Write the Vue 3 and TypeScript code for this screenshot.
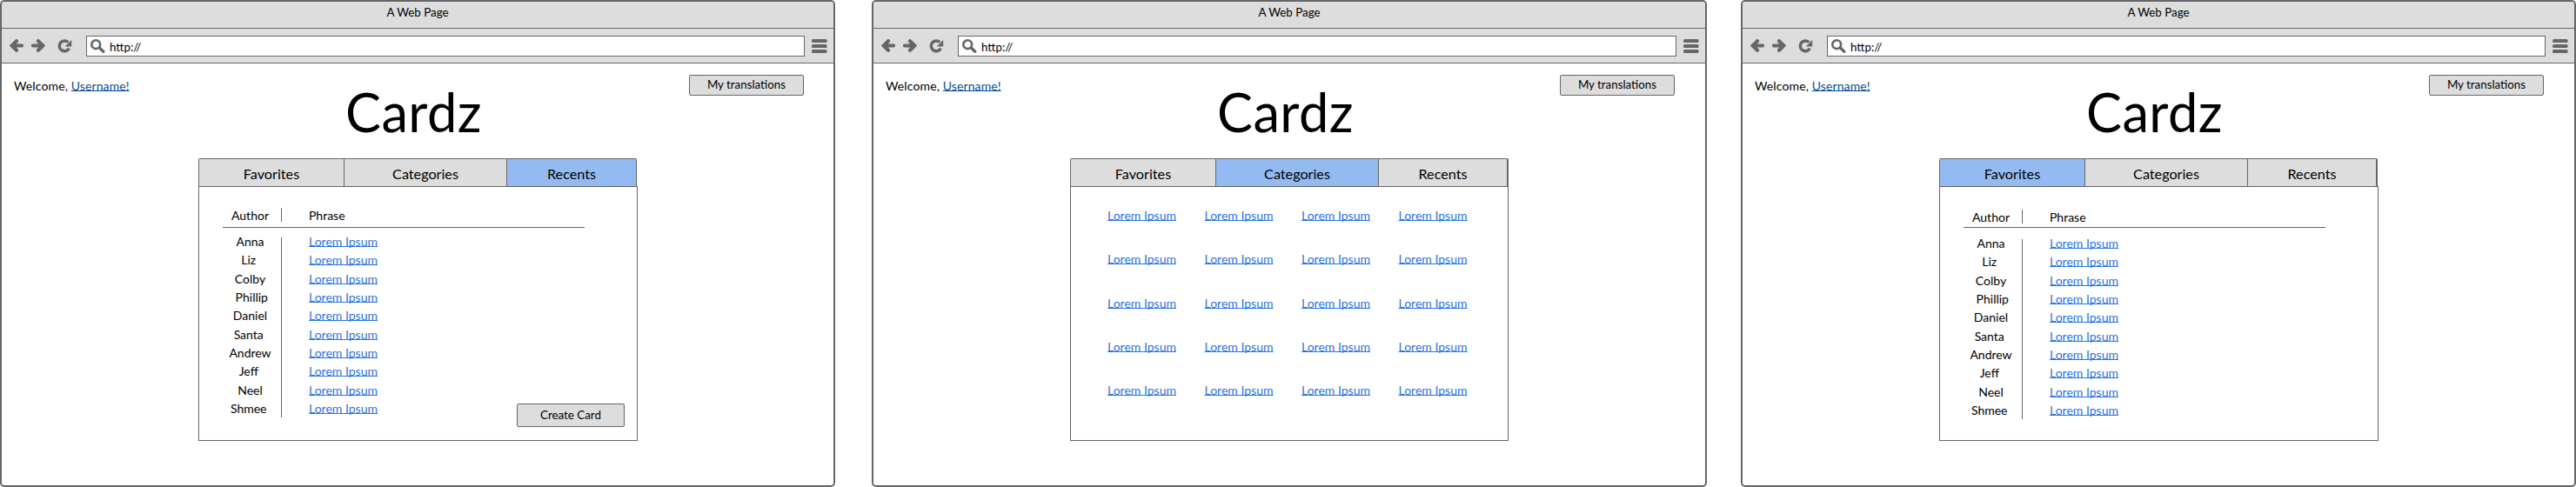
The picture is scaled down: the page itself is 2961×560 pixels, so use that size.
<script setup lang="ts">
type View = 'recents' | 'categories' | 'favorites'

const views: View[] = ['recents', 'categories', 'favorites']
const tabs: { id: View; label: string }[] = [
  { id: 'favorites', label: 'Favorites' },
  { id: 'categories', label: 'Categories' },
  { id: 'recents', label: 'Recents' },
]
const authors: string[] = ['Anna', 'Liz ', 'Colby', ' Phillip', 'Daniel', 'Santa ', 'Andrew', 'Jeff ', 'Neel', 'Shmee ']
const phrase = 'Lorem Ipsum'
</script>

<template>
  <main class="board">
    <section v-for="view in views" :key="view" class="window" :class="view">
      <header class="titlebar">A Web Page</header>
      <div class="toolbar">
        <svg class="nav" width="16" height="16" viewBox="0 0 16 16">
          <path d="M14 7.5H3M8 2.2L2.7 7.5L8 12.8" />
        </svg>
        <svg class="nav forward" width="16" height="16" viewBox="0 0 16 16">
          <path d="M2 7.5H13M8 2.2L13.3 7.5L8 12.8" />
        </svg>
        <svg class="reload" width="17" height="16" viewBox="0 0 17 16">
          <path class="arc" d="M12.3 3.6A5.9 5.9 0 1 0 13.4 10.6" />
          <path class="head" d="M16.2 1V8.4H8.8Z" />
        </svg>
        <div class="address">
          <svg class="search" width="17" height="16" viewBox="0 0 17 16">
            <circle cx="6.2" cy="6.2" r="4.9" />
            <path d="M10 9.8L14.8 14.2" />
          </svg>
          <span>http://</span>
        </div>
        <svg class="menu" width="18" height="16" viewBox="0 0 18 16">
          <rect width="17.6" height="4" rx="1.6" />
          <rect y="6" width="17.6" height="4" rx="1.6" />
          <rect y="12" width="17.6" height="4" rx="1.6" />
        </svg>
      </div>
      <div class="page">
        <div class="account">
          <p class="welcome">Welcome, <a>Username!</a></p>
          <button class="translations">My translations</button>
        </div>
        <h1>Cardz</h1>
        <nav class="tabs">
          <div v-for="tab in tabs" :key="tab.id" class="tab" :class="[tab.id + '-tab', { active: tab.id === view }]">
            {{ tab.label }}
          </div>
        </nav>
        <div class="panel">
          <div v-if="view === 'categories'" class="grid">
            <a v-for="n in 20" :key="n">{{ phrase }}</a>
          </div>
          <template v-else>
            <div class="table">
              <div class="head-row">
                <span class="author">Author</span>
                <i class="tick"></i>
                <span class="phrase">Phrase</span>
              </div>
              <div class="rows">
                <div class="names">
                  <span v-for="name in authors" :key="name">{{ name }}</span>
                </div>
                <i class="rule"></i>
                <div class="phrases">
                  <a v-for="name in authors" :key="name">{{ phrase }}</a>
                </div>
              </div>
            </div>
            <button v-if="view === 'recents'" class="create">Create Card</button>
          </template>
        </div>
      </div>
    </section>
  </main>
</template>

<style>
body {
  margin: 0;
  background: #fff;
}
</style>

<style scoped>
* {
  box-sizing: border-box;
}
.board {
  display: flex;
  width: 2961px;
  height: 560px;
  overflow: hidden;
  font-family: Lato, sans-serif;
  font-size: 13.333px;
  color: #000;
}
.window {
  flex: none;
  width: 960px;
  height: 560px;
  border: 2px solid #666;
  border-radius: 5px;
  overflow: hidden;
  background: #fff;
}
.categories {
  margin-left: 42px;
}
.favorites {
  margin-left: 39px;
}
.titlebar {
  height: 31px;
  border-bottom: 1px solid #666;
  background: #ddd;
  text-align: center;
  line-height: 24px;
}
.toolbar {
  display: flex;
  align-items: flex-start;
  height: 40px;
  padding: 8px 0 0 8px;
  border-bottom: 1px solid #666;
  background: #ddd;
}
.toolbar svg {
  flex: none;
  fill: none;
  stroke: #666;
}
.toolbar .nav {
  margin: 4px 0 0 1px;
  stroke-width: 4.2;
  stroke-linecap: round;
}
.toolbar .forward {
  margin-left: 9px;
}
.reload {
  margin: 4px 0 0 14px;
}
.reload .arc {
  stroke-width: 3.4;
}
.reload .head {
  fill: #666;
  stroke: none;
}
.address {
  display: flex;
  width: 826px;
  height: 24px;
  margin-left: 16px;
  border: 1px solid #666;
  background: #fff;
  line-height: 24px;
}
.search {
  margin: 3px 5px 0 4px;
  stroke-width: 2.6;
}
.search path {
  stroke-width: 3.4;
  stroke-linecap: round;
}
.toolbar .menu {
  margin: 4px 0 0 8px;
  fill: #666;
  stroke: none;
}
.account {
  display: flex;
  justify-content: space-between;
  height: 38px;
  padding: 13px 35px 0 14px;
}
.recents .account {
  padding-right: 34px;
}
.welcome {
  margin: 2px 0 0;
  font-size: 14px;
  line-height: 21px;
  letter-spacing: 0.12px;
}
a {
  color: #2c75e2;
  text-decoration: underline;
  text-decoration-thickness: 1px;
  text-decoration-skip-ink: none;
  text-underline-offset: 0;
}
.welcome a {
  color: #0b4f95;
}
button {
  padding: 0;
  border: 1px solid #666;
  border-radius: 2px;
  background: #ddd;
  color: #000;
  font: inherit;
}
.translations {
  width: 132px;
  height: 24px;
  padding-bottom: 2px;
}
h1 {
  height: 71px;
  margin: 0;
  text-align: center;
  font-size: 61.33px;
  font-weight: 400;
  letter-spacing: 0.5px;
  line-height: 34px;
  text-indent: -9px;
}
.tabs {
  display: flex;
  width: 504px;
  height: 32px;
  margin-left: 226px;
  border: 1px solid #666;
  border-bottom: 0;
  border-radius: 2px 2px 0 0;
  background: #ddd;
  font-size: 16.2px;
  line-height: 33px;
  text-align: center;
}
.categories .tabs,
.favorites .tabs {
  border-right-width: 2px;
}
.favorites-tab {
  width: 166px;
}
.categories-tab {
  width: 188px;
  border: solid #666;
  border-width: 0 1px;
}
.recents-tab {
  flex: 1;
}
.active {
  background: #94baf2;
}
.panel {
  display: flex;
  width: 505px;
  height: 293px;
  margin-left: 226px;
  border: 1px solid #666;
  font-size: 14px;
}
.categories .panel {
  width: 504px;
}
.table {
  flex: none;
  width: 416px;
  margin-left: 27px;
}
.head-row {
  display: flex;
  height: 47px;
  padding-top: 22px;
  border-bottom: 1px solid #666;
  line-height: 21px;
}
.favorites .head-row {
  padding-top: 24px;
}
.author {
  width: 63px;
  text-align: center;
}
.tick {
  width: 1px;
  height: 16px;
  margin: 2px 31px 0 4px;
  background: #666;
}
.rows {
  display: flex;
  padding-top: 5px;
  line-height: 21.333px;
}
.favorites .rows {
  padding-top: 7px;
}
.names,
.phrases {
  display: flex;
  flex-direction: column;
  white-space: pre;
}
.names {
  width: 63px;
  text-align: center;
}
.rule {
  width: 1px;
  height: 207px;
  margin: 6px 31px 0 4px;
  background: #666;
}
.create {
  align-self: flex-end;
  flex: none;
  width: 124px;
  height: 27px;
  margin: 0 0 15px -78px;
  padding-bottom: 1px;
  font-size: 13.333px;
}
.grid {
  display: grid;
  grid-template-columns: repeat(4, 111.5px);
  grid-auto-rows: 50.3px;
  align-content: start;
  margin-left: 42px;
  padding-top: 22px;
  line-height: 21px;
}
</style>
